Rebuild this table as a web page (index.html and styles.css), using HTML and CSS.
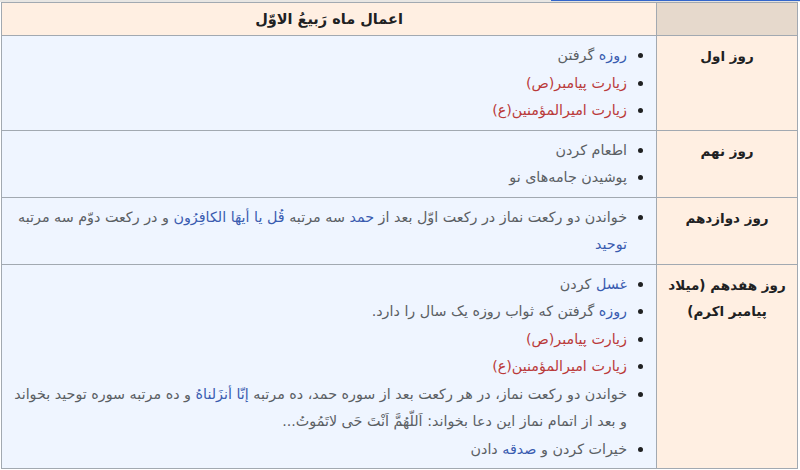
FILE: index.html
```html
<!DOCTYPE html>
<html lang="fa" dir="rtl">
<head>
<meta charset="utf-8">
<title>اعمال ماه ربیع الاول</title>
<link rel="stylesheet" href="styles.css">
</head>
<body>
<div class="topstrip"><div class="tab-active"></div><div class="tab-rest"></div></div>
<div class="wrap">
<table class="amal">
  <tr class="head">
    <th class="corner"></th>
    <th class="title">اعمال ماه رَبیعُ الاوّل</th>
  </tr>
  <tr>
    <td class="day">روز اول</td>
    <td class="acts">
      <ul>
        <li><a class="link">روزه</a> گرفتن</li>
        <li><a class="red">زیارت پیامبر(ص)</a></li>
        <li><a class="red">زیارت امیرالمؤمنین(ع)</a></li>
      </ul>
    </td>
  </tr>
  <tr>
    <td class="day">روز نهم</td>
    <td class="acts">
      <ul>
        <li>اطعام کردن</li>
        <li>پوشیدن جامه‌های نو</li>
      </ul>
    </td>
  </tr>
  <tr>
    <td class="day">روز دوازدهم</td>
    <td class="acts">
      <ul>
        <li>خواندن دو رکعت نماز در رکعت اوّل بعد از <a class="link">حمد</a> سه مرتبه <a class="link">قُل یا أیهَا الکافِرُون</a> و در رکعت دوّم سه مرتبه <a class="link">توحید</a></li>
      </ul>
    </td>
  </tr>
  <tr>
    <td class="day">روز هفدهم (میلاد پیامبر اکرم)</td>
    <td class="acts">
      <ul>
        <li><a class="link">غسل</a> کردن</li>
        <li><a class="link">روزه</a> گرفتن که ثواب روزه یک سال را دارد.</li>
        <li><a class="red">زیارت پیامبر(ص)</a></li>
        <li><a class="red">زیارت امیرالمؤمنین(ع)</a></li>
        <li>خواندن دو رکعت نماز، در هر رکعت بعد از سوره حمد، ده مرتبه <a class="link">إنّا أنزَلناهُ</a> و ده مرتبه سوره توحید بخواند و بعد از اتمام نماز این دعا بخواند: اَللّهُمَّ اَنْتَ حَی لاتَمُوتُ...</li>
        <li>خیرات کردن و <a class="link">صدقه</a> دادن</li>
      </ul>
    </td>
  </tr>
</table>
</div>
</body>
</html>
```

FILE: styles.css
```css
html, body {
  margin: 0;
  padding: 0;
  background: #ffffff;
}
body {
  font-family: "DejaVu Sans", "Noto Sans", sans-serif;
  font-size: 14.3px;
  color: #5b6064;
}
.topstrip {
  display: flex;
  flex-direction: row;
  height: 2px;
}
.tab-active {
  width: 249px;
  border-top: 1px solid #3366cc;
  background: #e4e2de;
}
.tab-rest {
  flex: 1;
  background: #e8e6e3;
}
.wrap {
  padding: 0 2px 0 1px;
}
.amal {
  width: 797px;
  border-collapse: collapse;
  border: 1px solid #a2a9b1;
}
.amal th, .amal td {
  border: 1px solid #a2a9b1;
  vertical-align: top;
}
.head th {
  height: 32px;
  padding: 0 8px;
  vertical-align: middle;
  font-size: 14.5px;
  font-weight: bold;
  color: #202122;
}
.corner {
  width: 124px;
  background: #e6d9cc;
}
.title {
  background: #ffefe2;
  text-align: center;
}
.day {
  width: 124px;
  background: #ffefe2;
  padding: 7px 8px 6px;
  text-align: center;
  font-size: 13.5px;
  font-weight: bold;
  color: #202122;
  line-height: 26px;
}
.acts {
  background: #eff5ff;
  padding: 6px 8px 5px 8px;
  text-align: right;
}
.acts ul {
  margin: 0;
  padding: 0 21px 0 0;
  list-style: disc;
}
.acts li {
  line-height: 27.5px;
  margin: 0;
}
.acts li::marker {
  color: #202122;
  font-size: 15px;
}
.link {
  color: #3a5cb0;
}
.red {
  color: #ba3a3a;
}
```
